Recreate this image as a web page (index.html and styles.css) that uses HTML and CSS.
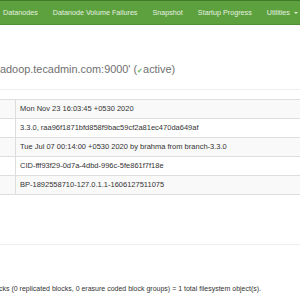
FILE: index.html
```html
<!DOCTYPE html>
<html>
<head>
<meta charset="utf-8">
<link rel="stylesheet" href="styles.css">
</head>
<body>
<nav class="navbar">
  <ul class="nav">
    <li>Datanodes</li>
    <li>Datanode Volume Failures</li>
    <li>Snapshot</li>
    <li>Startup Progress</li>
    <li>Utilities <span class="caret"></span></li>
  </ul>
</nav>
<main class="content">
  <div class="page-header">
    <h1 class="title">adoop.tecadmin.com:9000' (<span class="ok">&#10004;</span>active)</h1>
  </div>
  <table class="info">
    <tr><td class="key"></td><td>Mon Nov 23 16:03:45 +0530 2020</td></tr>
    <tr><td class="key"></td><td>3.3.0, raa96f1871bfd858f9bac59cf2a81ec470da649af</td></tr>
    <tr><td class="key"></td><td>Tue Jul 07 00:14:00 +0530 2020 by brahma from branch-3.3.0</td></tr>
    <tr><td class="key"></td><td>CID-fff93f29-0d7a-4dbd-996c-5fe861f7f18e</td></tr>
    <tr><td class="key"></td><td>BP-1892558710-127.0.1.1-1606127511075</td></tr>
  </table>
  <div class="page-header summary"></div>
  <p class="files">cks (0 replicated blocks, 0 erasure coded block groups) = 1 total filesystem object(s).</p>
  <div class="rule"></div>
</main>
</body>
</html>
```
FILE: styles.css
```css
html, body {
  margin: 0;
  padding: 0;
  background: #fff;
  overflow: hidden;
}
body {
  font-family: "Liberation Sans", Arial, sans-serif;
  font-size: 7px;
  color: #333;
  width: 300px;
  height: 300px;
}
.navbar {
  height: 23px;
  background: #5da13f;
  border-top: 1px solid #3f7a28;
  border-bottom: 1px solid #4f8f34;
}
.nav {
  list-style: none;
  margin: 0 0 0 -4.5px;
  padding: 0;
  display: flex;
  white-space: nowrap;
}
.nav li {
  padding: 0 7.5px;
  line-height: 23px;
  color: #e6f1e0;
  font-size: 7.2px;
}
.caret {
  display: inline-block;
  width: 0;
  height: 0;
  margin-left: 2px;
  vertical-align: middle;
  border-top: 2px solid #e6f1e0;
  border-left: 2px solid transparent;
  border-right: 2px solid transparent;
}
.page-header {
  padding-top: 36px;
  padding-bottom: 10px;
  border-bottom: 1px solid #eee;
  margin-bottom: 9px;
}
.title {
  margin: 0;
  font-size: 10.9px;
  line-height: 16px;
  font-weight: normal;
  color: #707070;
  white-space: nowrap;
}
.ok {
  color: #5cb85c;
  font-size: 7px;
}
.info {
  border-collapse: collapse;
  width: 300px;
  border-bottom: 1px solid #ddd;
}
.info td {
  border-top: 1px solid #ddd;
  height: 18px;
  padding: 0 4px;
  line-height: 18px;
  white-space: nowrap;
  font-size: 7.5px;
}
.info tr:nth-child(odd) td {
  background: #f9f9f9;
}
.info td.key {
  width: 7px;
  border-right: 1px solid #ddd;
}
.summary {
  padding-top: 38px;
  padding-bottom: 11px;
  margin-bottom: 0;
}
.files {
  margin: 0;
  padding-top: 39px;
  line-height: 10px;
  white-space: nowrap;
  margin-left: -1px;
}
.rule {
  margin-top: 6px;
  border-top: 1px solid #ddd;
}
```
